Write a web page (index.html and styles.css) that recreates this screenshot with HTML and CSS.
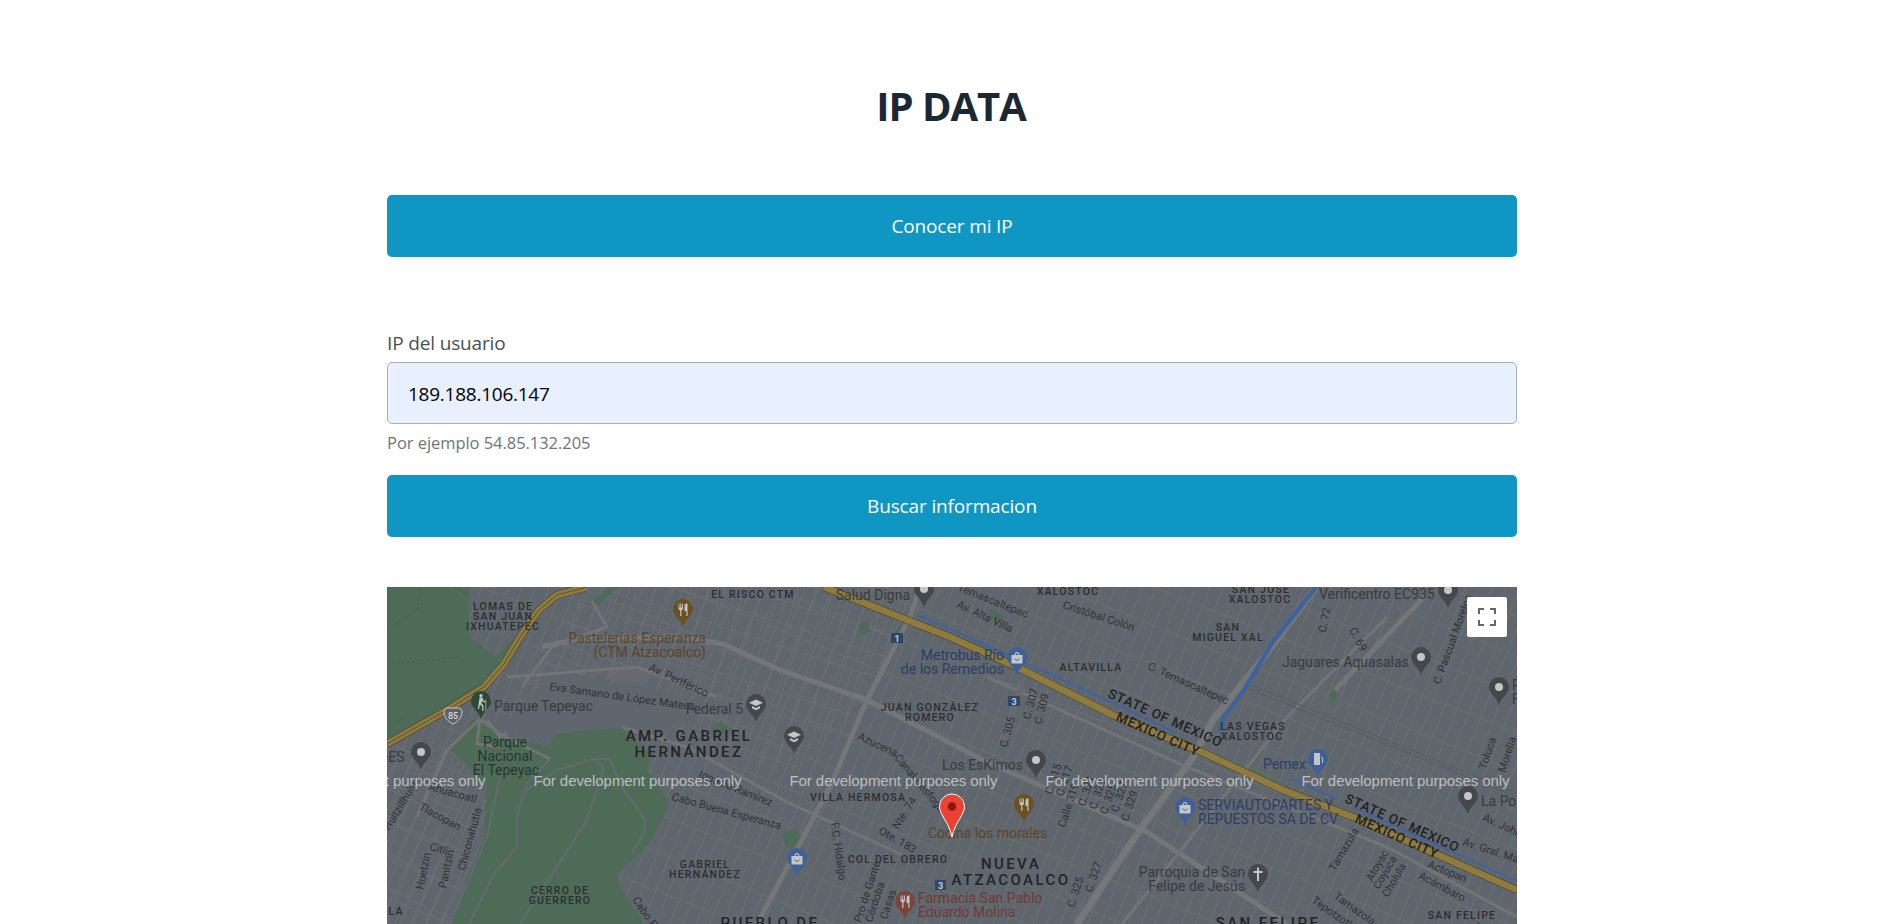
FILE: index.html
```html
<!DOCTYPE html>
<html lang="es">
<head>
<meta charset="utf-8">
<title>IP DATA</title>
<link rel="stylesheet" href="styles.css">
</head>
<body>
<main class="page">
  <h1 class="title">IP DATA</h1>
  <button class="btn btn-first" type="button">Conocer mi IP</button>
  <form class="form">
    <label class="label" for="ip">IP del usuario</label>
    <input class="input" id="ip" type="text" value="189.188.106.147">
    <small class="help">Por ejemplo 54.85.132.205</small>
    <button class="btn" type="button">Buscar informacion</button>
  </form>
  <section class="map">
    <svg class="map-svg" viewBox="0 0 1130 337" width="1130" height="337" xmlns="http://www.w3.org/2000/svg">
      <defs>
        <pattern id="grid-a" width="12.500" height="36" patternUnits="userSpaceOnUse" patternTransform="rotate(22)">
          <path class="grid-line" d="M0 0V36M0 0H12.500"/>
        </pattern>
        <pattern id="grid-b" width="17" height="22" patternUnits="userSpaceOnUse" patternTransform="rotate(18)">
          <path class="grid-line" d="M0 0V22M0 0H17"/>
        </pattern>
        <pattern id="grid-c" width="14" height="30" patternUnits="userSpaceOnUse" patternTransform="rotate(26)">
          <path class="grid-line" d="M0 0V30M0 0H14"/>
        </pattern>
        <path id="hwy-a" d="M0 157L60 123L97 100L117 77L130 55L143 35L153 22L170 8L200 0"/>
        <path id="hwy-b" d="M437 0L563 50L630 80L726 128L815 165L896 203L966 230L1130 303"/>
        <path id="pin" d="M10 28.500C8.500 20.500 0 17 0 10A10 10 0 0 1 20 10C20 17 11.500 20.500 10 28.500Z"/>
        <g id="p-dot"><use href="#pin"/><circle class="in" cx="10" cy="10" r="4"/></g>
        <g id="p-food"><use href="#pin"/><path class="in" d="M5.500 4.500h.9v4h.9v-4h.9v4h.9v-4h.9v5.500L8.400 11.500V17H7.200v-5.500L5.500 10zM13 4.500h1.500V17h-1.200v-5H11.500V8c0-2 .8-3.500 1.500-3.500z"/></g>
        <g id="p-grad"><use href="#pin"/><path class="in" d="M10 5.500l7 3.300-7 3.300-7-3.300zM6 12l4 1.900 4-1.900v2.300l-4 2-4-2z"/></g>
        <g id="p-bag"><use href="#pin"/><path class="in" d="M4.500 8h11v8.500h-11zM7.500 8c0-4 5-4 5 0h-1.100c0-2.500-2.800-2.500-2.800 0z"/><path class="in-dark" d="M7.500 11.500c1 2.200 4 2.200 5 0"/></g>
        <g id="p-cross"><use href="#pin"/><path class="in" d="M9 3.500h2V7h3.500v2H11v8H9V9H5.500V7H9z"/></g>
        <g id="p-fuel"><use href="#pin"/><path class="in" d="M6 4h6v12H6zM13 7l2 2v5h-1V9l-1-1z"/></g>
        <g id="p-hike"><use href="#pin"/><path class="in" d="M10 3a1.600 1.600 0 1 1-.01 0zM8.500 6.500h3l1 3 2 1-.5 1-2.500-1-.5-1-.5 3 2 2V20h-1.200v-4.500L9 13.500 8 18H6.800l1-6zM14.500 8.500h.7V20h-.7z"/></g>
      </defs>

      <rect class="base" width="1130" height="337"/>
      <rect width="1130" height="337" fill="url(#grid-a)"/>
      <path d="M120 130L200 0H540L480 110L400 190L250 130Z" fill="url(#grid-b)"/>
      <path d="M0 160H120L90 337H0Z" fill="url(#grid-c)"/>
      <path class="plain" d="M112 140L170 85L260 100L330 120L260 150L168 142L163 158Z"/>
      <rect class="block" x="223" y="81" width="38" height="14"/>

      <!-- parks -->
      <path class="green" d="M0 0H83L82 20L82 50L110 70L128 50L117 77L97 100L0 155Z"/>
      <path class="green" d="M62 163L87 133L113 147L163 160L167 147L233 140L263 167L260 183L283 217L260 260L230 287L233 300L257 337H63L97 250L100 200L72 170Z"/>
      <path class="green" d="M205 14L222 0H232L210 18ZM471 37l9-3 4 10-9 4zM395 246l16-4 3 16-15 4zM325 142l8-8 12 10-20 4zM604 22l12 6-6 10-8-10zM940 113l8-12 2 14zM505 50l8-12 2 2-7 12z"/>
      <path class="admin" d="M0 43L30 22L34 5L28 0M0 77L72 70M0 140L14 132M67 0L85 10"/>
      <path class="green-line" d="M711 310L735 271M846 173L900 196"/>

      <!-- park and minor paths -->
      <path class="path" d="M113 190L100 250L63 337M163 172L140 197L130 227L130 260L107 287L82 337M133 337L200 233L217 180L207 172L170 183L140 203M207 172L223 172L233 197L258 233L258 243L245 267"/>
      <path class="road-thin" d="M93 132L60 163L30 230M93 132L90 157L113 160M100 133L113 150L120 147M93 132L113 147L163 172"/>

      <!-- arterial roads -->
      <g class="road">
        <path d="M443 200L480 113L523 30L533 0"/>
        <path d="M293 50L336 57L393 83L480 113L600 175L760 245L900 337"/>
        <path d="M948 103L1037 10"/>
        <path d="M155 60L190 52L293 50"/>
        <path d="M370 337L443 200"/>
      </g>
      <path class="road-wide" d="M690 337L746 253L806 170L826 133L877 70L929 0"/>
      <g class="road-thin">
        <path d="M735 337L900 130L1000 30"/>
        <path d="M235 140L300 160L400 215L520 270"/>
        <path d="M600 90L800 180L1000 260L1130 330"/>
        <path d="M135 100L165 60L220 40L205 14"/>
        <path d="M120 90L250 80L330 110"/>
      </g>
      <path class="block" d="M613 155l8-3 17-55-7-3z"/>
      <path class="rail" d="M859 96L1130 206M857 100L1130 210"/>

      <!-- river -->
      <path class="river" d="M833 143L837 130L859 100L885 56L929 0"/>

      <!-- motorway -->
      <use class="hwy-edge" href="#hwy-a"/>
      <use class="hwy-edge" href="#hwy-b"/>
      <use class="hwy" href="#hwy-a"/>
      <use class="hwy" href="#hwy-b"/>
      <use class="hwy-line" href="#hwy-a"/>
      <g class="hwy-blue">
        <path d="M530 28L563 42L726 116L790 146"/>
        <path d="M905 192L950 212"/>
        <path d="M966 220L1130 294"/>
      </g>

      <!-- highway shield -->
      <path class="shield" d="M59 121h14l2 3c0 6-3 10-9 13c-6-3-9-7-9-13z"/>
      <text class="shield-t" x="66" y="132" text-anchor="middle">85</text>

      <!-- transit badges -->
      <rect class="badge" x="504" y="46" width="12" height="10"/><text class="badge-t" x="510" y="54.500" text-anchor="middle">1</text>
      <rect class="badge" x="621" y="109" width="12" height="10"/><text class="badge-t" x="627" y="117.500" text-anchor="middle">3</text>
      <rect class="badge" x="548" y="293" width="11" height="10"/><text class="badge-t" x="553.500" y="301.500" text-anchor="middle">3</text>

      <!-- street labels -->
      <g class="st">
        <text x="760" y="82" transform="rotate(24 760 82)">C. Temascaltepec</text>
        <text x="675" y="21" transform="rotate(18 675 21)">Cristóbal Colón</text>
        <text x="569" y="20" transform="rotate(25 569 20)">Av. Alta Villa</text>
        <text x="570" y="3" transform="rotate(22 570 3)">Temascaltepec</text>
        <text x="939" y="46" transform="rotate(-80 939 46)">C. 72</text>
        <text x="962" y="43" transform="rotate(62 962 43)">C. 69</text>
        <text x="1053" y="98" transform="rotate(-70 1053 98)">C. Pascual Morelos</text>
        <text x="620" y="161" transform="rotate(-75 620 161)">C. 305</text>
        <text x="643" y="133" transform="rotate(-75 643 133)">C. 307</text>
        <text x="654" y="138" transform="rotate(-75 654 138)">C. 309</text>
        <text x="665" y="208" transform="rotate(-72 665 208)">C. 315</text>
        <text x="676" y="210" transform="rotate(-72 676 210)">C. 317</text>
        <text x="678" y="241" transform="rotate(-72 678 241)">Calle 319</text>
        <text x="698" y="220" transform="rotate(-72 698 220)">C. 321</text>
        <text x="709" y="223" transform="rotate(-72 709 223)">C. 323</text>
        <text x="720" y="228" transform="rotate(-72 720 228)">C. 325</text>
        <text x="731" y="226" transform="rotate(-72 731 226)">C. 327</text>
        <text x="741" y="235" transform="rotate(-72 741 235)">C. 329</text>
        <text x="687" y="321" transform="rotate(-72 687 321)">C. 325</text>
        <text x="705" y="306" transform="rotate(-72 705 306)">C. 327</text>
        <text x="948" y="285" transform="rotate(-60 948 285)">Tamazula</text>
        <text x="985" y="295" transform="rotate(-60 985 295)">Atoyac</text>
        <text x="992" y="303" transform="rotate(-60 992 303)">Coyuca</text>
        <text x="1001" y="311" transform="rotate(-60 1001 311)">Cholula</text>
        <text x="1040" y="280" transform="rotate(22 1040 280)">Actopan</text>
        <text x="1031" y="291" transform="rotate(28 1031 291)">Acámbaro</text>
        <text x="946" y="311" transform="rotate(35 946 311)">Tamazola</text>
        <text x="924" y="315" transform="rotate(35 924 315)">Tepotzotlán</text>
        <text x="1095" y="233" transform="rotate(25 1095 233)">Av. John</text>
        <text x="1075" y="258" transform="rotate(18 1075 258)">Av. Gral. Mariano</text>
        <text x="1099" y="183" transform="rotate(-72 1099 183)">Toluca</text>
        <text x="1118" y="186" transform="rotate(-72 1118 186)">Morelia</text>
        <text x="261" y="83" transform="rotate(25 261 83)">Av. Periférico</text>
        <text x="162" y="103" transform="rotate(8 162 103)">Eva Samano de López Mateos</text>
        <text x="470" y="152" transform="rotate(25 470 152)">Azucena</text>
        <text x="507" y="171" transform="rotate(50 507 171)">Canal Desfogue</text>
        <text x="311" y="190" transform="rotate(22 311 190)">Ignacio Ramírez</text>
        <text x="284" y="213" transform="rotate(15 284 213)">Cabo Buena Esperanza</text>
        <text x="491" y="246" transform="rotate(30 491 246)">Ote. 183</text>
        <text x="511" y="243" transform="rotate(-58 511 243)">Nte. 74</text>
        <text x="444" y="236" transform="rotate(82 444 236)">F.C. Hidalgo</text>
        <text x="2" y="244" transform="rotate(-58 2 244)">Huitzillhuitl</text>
        <text x="31" y="222" transform="rotate(28 31 222)">Tlacopan</text>
        <text x="42" y="263" transform="rotate(15 42 263)">Citli</text>
        <text x="36" y="303" transform="rotate(-78 36 303)">Huetzin</text>
        <text x="59" y="302" transform="rotate(-78 59 302)">Panitzin</text>
        <text x="78" y="284" transform="rotate(-75 78 284)">Chiconahutla</text>
        <text x="41" y="203" transform="rotate(15 41 203)">Ahuacoatl</text>
        <text x="245" y="313" transform="rotate(55 245 313)">Cabo Frio</text>
        <text x="474" y="336" transform="rotate(-72 474 336)">Pro de Gante</text>
        <text x="485" y="336" transform="rotate(-72 485 336)">Córdoba</text>
        <text x="500" y="333" transform="rotate(-72 500 333)">Casas</text>
      </g>

      <!-- neighbourhood labels -->
      <g class="area" text-anchor="middle">
        <text x="116" y="23">LOMAS DE</text>
        <text x="116" y="33">SAN JUAN</text>
        <text x="116" y="43">IXHUATEPEC</text>
        <text x="366" y="11">EL RISCO CTM</text>
        <text x="543" y="124">JUAN GONZÁLEZ</text>
        <text x="543" y="134">ROMERO</text>
        <text x="471" y="214">VILLA HERMOSA</text>
        <text x="511" y="276">COL DEL OBRERO</text>
        <text x="318" y="281">GABRIEL</text>
        <text x="318" y="291">HERNÁNDEZ</text>
        <text x="173" y="307">CERRO DE</text>
        <text x="173" y="317">GUERRERO</text>
        <text x="9" y="328">LA</text>
        <text x="704" y="84">ALTAVILLA</text>
        <text x="866" y="143">LAS VEGAS</text>
        <text x="865" y="153">XALOSTOC</text>
        <text x="841" y="44">SAN</text>
        <text x="841" y="54">MIGUEL XAL</text>
        <text x="874" y="6">SAN JOSE</text>
        <text x="873" y="16">XALOSTOC</text>
        <text x="681" y="8">XALOSTOC</text>
        <text x="1075" y="332">SAN FELIPE</text>
        <text x="1075" y="345">DE JESÚS</text>
      </g>
      <g class="area-big" text-anchor="middle">
        <text x="302" y="154">AMP. GABRIEL</text>
        <text x="302" y="170">HERNÁNDEZ</text>
        <text x="624" y="282">NUEVA</text>
        <text x="624" y="298">ATZACOALCO</text>
        <text x="383" y="341">PUEBLO DE</text>
        <text x="881" y="341">SAN FELIPE</text>
      </g>

      <!-- highway labels -->
      <g class="state">
        <text x="720" y="110" transform="rotate(24 720 110)">STATE OF MEXICO</text>
        <text x="728" y="133" transform="rotate(24 728 133)">MEXICO CITY</text>
        <text x="957" y="215" transform="rotate(24 957 215)">STATE OF MEXICO</text>
        <text x="967" y="235" transform="rotate(24 967 235)">MEXICO CITY</text>
      </g>

      <!-- place labels -->
      <g class="poi">
        <text x="107" y="124">Parque Tepeyac</text>
        <text x="356" y="127" text-anchor="end">Federal 5</text>
        <text x="523" y="13" text-anchor="end">Salud Digna</text>
        <text x="636" y="183" text-anchor="end">Los EsKimos</text>
        <text x="932" y="12">Verificentro EC935</text>
        <text x="895" y="80">Jaguares Aquasalas</text>
        <text x="1125" y="103">Plaza</text>
        <text x="1125" y="117">Fiesta</text>
        <text x="1094" y="219">La Posta</text>
        <text x="858" y="290" text-anchor="end">Parroquia de San</text>
        <text x="858" y="304" text-anchor="end">Felipe de Jesús</text>
        <text x="-8" y="175">DES</text>
      </g>
      <g class="poi-food">
        <text x="319" y="56" text-anchor="end">Pastelerías Esperanza</text>
        <text x="319" y="70" text-anchor="end">(CTM Atzacoalco)</text>
        <text x="541" y="251">Cocina los morales</text>
      </g>
      <g class="poi-park" text-anchor="middle">
        <text x="118" y="160">Parque</text>
        <text x="118" y="174">Nacional</text>
        <text x="119" y="188">El Tepeyac</text>
      </g>
      <g class="poi-shop">
        <text x="617" y="73" text-anchor="end">Metrobus Río</text>
        <text x="617" y="87" text-anchor="end">de los Remedios</text>
        <text x="876" y="182">Pemex</text>
        <text x="811" y="223">SERVIAUTOPARTES Y</text>
        <text x="811" y="237">REPUESTOS SA DE CV</text>
      </g>
      <g class="poi-med">
        <text x="531" y="316">Farmacia San Pablo</text>
        <text x="531" y="330">Eduardo Molina</text>
      </g>

      <!-- place pins -->
      <g class="pin-gray">
        <use href="#p-dot" x="527" y="-8"/>
        <use href="#p-grad" x="359" y="107"/>
        <use href="#p-grad" x="397" y="139"/>
        <use href="#p-dot" x="24" y="155"/>
        <use href="#p-dot" x="1051" y="-7"/>
        <use href="#p-dot" x="1024" y="60"/>
        <use href="#p-dot" x="1102" y="90"/>
        <use href="#p-dot" x="639" y="163"/>
        <use href="#p-dot" x="1071" y="199"/>
        <use href="#p-cross" x="861" y="277"/>
      </g>
      <g class="pin-food">
        <use href="#p-food" x="286" y="12"/>
        <use href="#p-food" x="627" y="207"/>
      </g>
      <g class="pin-shop">
        <use href="#p-bag" x="400" y="261"/>
        <use href="#p-bag" x="620" y="60"/>
        <use href="#p-fuel" x="921" y="162"/>
        <use href="#p-bag" x="788" y="210"/>
      </g>
      <g class="pin-park"><use href="#p-hike" x="84" y="104"/></g>
      <g class="pin-med"><use href="#p-food" x="508" y="304"/></g>

      <!-- development watermark -->
      <g class="mark">
        <text x="-109.500" y="199" textLength="208">For development purposes only</text>
        <text x="146.500" y="199" textLength="208">For development purposes only</text>
        <text x="402.500" y="199" textLength="208">For development purposes only</text>
        <text x="658.500" y="199" textLength="208">For development purposes only</text>
        <text x="914.500" y="199" textLength="208">For development purposes only</text>
      </g>

      <!-- result marker -->
      <path class="marker" d="M565 250C562 235 552.500 228 552.500 219.500A12.500 12.500 0 0 1 577.500 219.500C577.500 228 568 235 565 250Z"/>
      <circle class="marker-dot" cx="565" cy="219.500" r="4.300"/>
    </svg>
    <button class="fullscreen" type="button" aria-label="Pantalla completa">
      <svg class="fullscreen-icon" viewBox="0 0 18 18" width="18" height="18" xmlns="http://www.w3.org/2000/svg"><path d="M0 0v6h2V2h4V0H0zm16 0h-4v2h4v4h2V0h-2zm0 16h-4v2h6v-6h-2v4zM2 12H0v6h6v-2H2v-4z"/></svg>
    </button>
  </section>
</main>
</body>
</html>
```

FILE: styles.css
```css
* { box-sizing: border-box; }

html, body {
  margin: 0;
  padding: 0;
  height: 100%;
  overflow: hidden;
  background: #fff;
}

body {
  font-family: "Open Sans", "Noto Sans", sans-serif;
  color: #212529;
}

.page {
  display: flex;
  flex-direction: column;
  padding: 82px 384px 0 387px;
}

.title {
  margin: 0 0 65px;
  padding-right: 2px;
  font-size: 40px;
  line-height: 48px;
  font-weight: 700;
  letter-spacing: -1px;
  text-align: center;
  color: #1b2733;
}

.btn {
  display: block;
  width: 100%;
  height: 62px;
  padding: 0;
  border: 0;
  border-radius: 5px;
  background: #1096c2;
  color: #fff;
  font-family: inherit;
  font-size: 19px;
  letter-spacing: -0.15px;
  text-align: center;
}

.form {
  display: flex;
  flex-direction: column;
  margin-top: 71px;
}

.label {
  height: 34px;
  font-size: 19px;
  line-height: 30px;
  letter-spacing: -0.15px;
  color: #495057;
}

.input {
  width: 100%;
  height: 62px;
  padding: 2px 20px 0;
  border: 1px solid #a7afbd;
  border-radius: 5px;
  background: #e8f0fe;
  color: #000;
  font-family: inherit;
  font-size: 19px;
  letter-spacing: -0.25px;
  outline: 0;
}

.help {
  height: 51px;
  padding-top: 7px;
  font-size: 16.500px;
  line-height: 24px;
  letter-spacing: -0.05px;
  color: #6c757d;
}

.map {
  position: relative;
  height: 337px;
  margin-top: 50px;
  overflow: hidden;
  background: #5f666d;
}

.map-svg { display: block; }

.fullscreen {
  position: absolute;
  top: 10px;
  right: 10px;
  display: flex;
  align-items: center;
  justify-content: center;
  width: 40px;
  height: 40px;
  padding: 0;
  border: 0;
  border-radius: 2px;
  background: #fff;
}

.fullscreen-icon { fill: #666; display: block; }

/* map ground */
.base { fill: #5f666d; }
.plain { fill: #60666d; }
.block { fill: #686a6f; }
.grid-line { fill: none; stroke: #6f7173; stroke-width: 1.700; }
.green { fill: #4e6b58; }
.green-line { fill: none; stroke: #4e7a5c; stroke-width: 1.500; }
.admin { fill: none; stroke: #3f5a4a; stroke-width: .8; stroke-dasharray: 3 2; }
.path { fill: none; stroke: #686a75; stroke-width: 1.600; stroke-linejoin: round; }
.road { fill: none; stroke: #757678; stroke-width: 5; stroke-linejoin: round; }
.road-wide { fill: none; stroke: #767779; stroke-width: 7; stroke-linejoin: round; }
.road-thin { fill: none; stroke: #737476; stroke-width: 3; stroke-linejoin: round; }
.rail { fill: none; stroke: #585b60; stroke-width: 1; }
.river { fill: none; stroke: #40629b; stroke-width: 4.500; stroke-linejoin: round; stroke-linecap: round; }
.hwy-edge { fill: none; stroke: #4f4c3a; stroke-width: 8; stroke-linejoin: round; }
.hwy { fill: none; stroke: #8f7b3d; stroke-width: 6.500; stroke-linejoin: round; }
.hwy-line { fill: none; stroke: #5a5236; stroke-width: 1; }
.hwy-blue { fill: none; stroke: #3f639f; stroke-width: 2; }
.shield { fill: #5e6269; stroke: #c7c9cb; stroke-width: 1; }
.shield-t { font: 500 9px Roboto, sans-serif; fill: #d9dadb; }
.badge { fill: #2f4669; }
.badge-t { font: 700 9px Roboto, sans-serif; fill: #c5ccd6; }

/* map labels */
.st text { font: 400 11px Roboto, sans-serif; fill: #303337; }
.area text { font: 500 10.500px Roboto, sans-serif; letter-spacing: 1.200px; fill: #2c2e31; }
.area-big text { font: 500 15px Roboto, sans-serif; letter-spacing: 2.400px; fill: #222427; }
.state text { font: 500 13.500px Roboto, sans-serif; letter-spacing: .7px; fill: #1f2124; }
.poi text { font: 400 14px Roboto, sans-serif; fill: #383b3f; }
.poi-food text { font: 400 14px Roboto, sans-serif; fill: #5c4525; }
.poi-park text { font: 400 14px Roboto, sans-serif; fill: #24382c; }
.poi-shop text { font: 400 14px Roboto, sans-serif; fill: #2b3e68; }
.poi-med text { font: 400 14px Roboto, sans-serif; fill: #713a33; }
.mark text { font: 400 15px "Liberation Sans", Arial, sans-serif; fill: #bcbfc1; }

/* map pins */
.in { fill: #c3c5c7; }
.in-dark { fill: none; stroke: #3f5f98; stroke-width: 1; }
.pin-gray { fill: #44484d; }
.pin-food { fill: #6b5120; }
.pin-shop { fill: #3f5f98; }
.pin-park { fill: #2d4a38; }
.pin-med { fill: #7a443a; }
.marker { fill: #ea4335; stroke: #fff; stroke-width: 1; }
.marker-dot { fill: #8e1510; }
```
